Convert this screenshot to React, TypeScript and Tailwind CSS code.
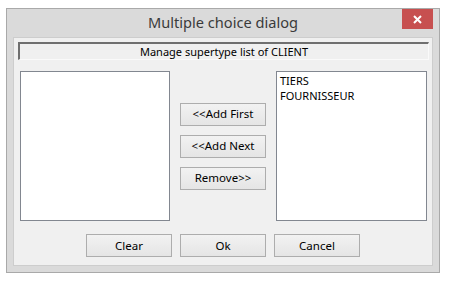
const font = { fontFamily: '"Noto Sans", "Open Sans", sans-serif' };

function Btn({ label }: { label: string }) {
  return (
    <button className="w-[86px] h-[23px] border border-[#adadad] bg-gradient-to-b from-[#f2f2f2] to-[#e5e5e5] text-[11.5px] text-black leading-none">
      {label}
    </button>
  );
}

function CloseIcon() {
  return (
    <svg width="9" height="9" viewBox="0 0 9 9">
      <path d="M1 1L8 8M8 1L1 8" stroke="#fff" strokeWidth="2" />
    </svg>
  );
}

export default function App() {
  const items = ["TIERS", "FOURNISSEUR"];

  return (
    <div className="w-[450px] h-[281px] bg-white pl-[6px] pt-[8px]" style={font}>
      <div className="w-[434px] h-[265px] border border-[#a9a9a9] bg-[#dadada] flex flex-col px-[6px] pb-[6px]">
        {/* title bar */}
        <div className="relative h-[28px] -mx-[6px] flex items-center justify-center">
          <span className="text-[14.6px] text-[#3a3a3a] pb-[1px]">Multiple choice dialog</span>
          <div className="absolute top-0 right-[6px] w-[31px] h-[20px] bg-[#c75050] flex items-center justify-center">
            <CloseIcon />
          </div>
        </div>

        {/* client area */}
        <div className="flex-1 border border-[#cdcdcd] bg-[#f0f0f0] flex flex-col">
          <div className="mt-[4px] ml-[4px] mr-[3px] h-[18px] border-t-2 border-l-2 border-t-[#6f6f6f] border-l-[#6f6f6f] border-b border-r border-b-[#fafafa] border-r-[#fafafa] flex items-center justify-center text-[11px] leading-none text-black">
            Manage supertype list of CLIENT
          </div>

          <div className="mt-[11px] ml-[6px] flex gap-[10px]">
            <div className="w-[150px] h-[150px] border border-[#828790] bg-white" />
            <div className="w-[86px] flex flex-col justify-center gap-[9px]">
              <Btn label="<<Add First" />
              <Btn label="<<Add Next" />
              <Btn label="Remove>>" />
            </div>
            <div className="w-[151px] h-[150px] border border-[#828790] bg-white pl-[3px] pt-[2px] text-[11px] leading-[14px] text-black">
              {items.map((it) => (
                <div key={it} className="h-[15px]">{it}</div>
              ))}
            </div>
          </div>

          <div className="mt-[13px] flex justify-center gap-[8px]">
            <Btn label="Clear" />
            <Btn label="Ok" />
            <Btn label="Cancel" />
          </div>
        </div>
      </div>
    </div>
  );
}
